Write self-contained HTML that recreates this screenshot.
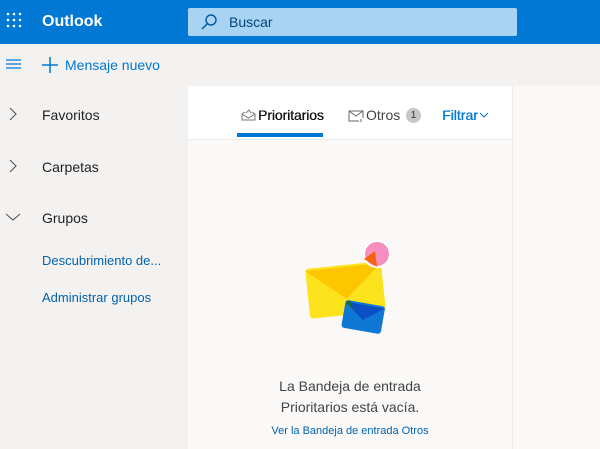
<html><head><style>
body{margin:0;width:600px;height:449px;overflow:hidden;font-family:"Liberation Sans",sans-serif;background:#f3f2f1;position:relative}
.a{position:absolute}
</style></head><body>
<div class="a" style="left:0;top:0;width:600px;height:44px;background:#0078d4"></div>
<svg class="a" style="left:6px;top:12px" width="16" height="16" fill="#fff"><g><circle cx="2" cy="2" r="1.3"/><circle cx="8" cy="2" r="1.3"/><circle cx="14" cy="2" r="1.3"/><circle cx="2" cy="8" r="1.3"/><circle cx="8" cy="8" r="1.3"/><circle cx="14" cy="8" r="1.3"/><circle cx="2" cy="14" r="1.3"/><circle cx="8" cy="14" r="1.3"/><circle cx="14" cy="14" r="1.3"/></g></svg>
<div class="a" style="left:42px;top:13px;color:#fff;font-size:16px;font-weight:bold">Outlook</div>
<div class="a" style="left:188px;top:8px;width:329px;height:28px;background:#a9d3f2;border-radius:2px"></div>
<svg class="a" style="left:200px;top:13px" width="18" height="18" fill="none" stroke="#005a9e" stroke-width="1.4"><circle cx="11" cy="7" r="5"/><path d="M7.5 10.5L2 16"/></svg>
<div class="a" style="left:229px;top:14px;color:#004578;font-size:14px">Buscar</div>
<svg class="a" style="left:6px;top:58px" width="16" height="12" stroke="#0078d4" stroke-width="1.2"><path d="M0 2H15M0 6H15M0 10H15"/></svg>
<svg class="a" style="left:41px;top:56px" width="18" height="18" stroke="#0078d4" stroke-width="1.5"><path d="M9 1V17M1 9H17"/></svg>
<div class="a" style="left:65px;top:57px;color:#0078d4;font-size:14px">Mensaje nuevo</div>
<div class="a" style="left:188px;top:86px;width:324px;height:363px;background:#faf9f8"></div>
<div class="a" style="left:188px;top:86px;width:324px;height:53px;background:#fff;border-bottom:1px solid #edebe9"></div>
<div class="a" style="left:512px;top:86px;width:1px;height:363px;background:#edebe9"></div>
<div class="a" style="left:513px;top:86px;width:87px;height:363px;background:#faf9f8"></div>
<svg class="a" style="left:8px;top:107px" width="10" height="14" fill="none" stroke="#555" stroke-width="1.1"><path d="M2 1L8 7L2 13"/></svg>
<svg class="a" style="left:8px;top:159px" width="10" height="14" fill="none" stroke="#555" stroke-width="1.1"><path d="M2 1L8 7L2 13"/></svg>
<svg class="a" style="left:5px;top:212px" width="16" height="10" fill="none" stroke="#555" stroke-width="1.1"><path d="M1 2L8 8L15 2"/></svg>
<div class="a" style="left:42px;top:107px;font-size:14px;color:#222">Favoritos</div>
<div class="a" style="left:42px;top:159px;font-size:14px;color:#222">Carpetas</div>
<div class="a" style="left:42px;top:210px;font-size:14px;color:#222">Grupos</div>
<div class="a" style="left:42px;top:253px;font-size:13px;color:#0063b1">Descubrimiento de...</div>
<div class="a" style="left:42px;top:290px;font-size:13px;color:#0063b1">Administrar grupos</div>
<svg class="a" style="left:241px;top:109px" width="15" height="12" fill="none" stroke="#777" stroke-width="1"><path d="M1 5V11H14V5L11 3M1 5L7.5 9L14 5M1 5L4 3M5 4L8 1L10 4"/></svg>
<div class="a" style="left:258px;top:107px;font-size:14px;color:#111;letter-spacing:-.1px;text-shadow:0.3px 0 0 #111">Prioritarios</div>
<div class="a" style="left:237px;top:133px;width:86px;height:4px;background:#0078d4"></div>
<svg class="a" style="left:348px;top:110px" width="16" height="12" fill="none" stroke="#666" stroke-width="1"><path d="M1 1H15V8M1 1V11H11M1 1L8 6L15 1M13 9V12"/></svg>
<div class="a" style="left:366px;top:107px;font-size:14px;color:#444">Otros</div>
<div class="a" style="left:406px;top:108px;width:15px;height:15px;border-radius:50%;background:#c8c6c4;font-size:10px;text-align:center;line-height:15px;color:#333">1</div>
<div class="a" style="left:442px;top:107px;font-size:14px;color:#0078d4;text-shadow:0.4px 0 0 #0078d4">Filtrar</div>
<svg class="a" style="left:479px;top:112px" width="10" height="7" fill="none" stroke="#0078d4" stroke-width="1.1"><path d="M1 1L5 5L9 1"/></svg>
<svg class="a" style="left:300px;top:235px" width="100" height="105">
<g transform="rotate(-6 45 50)"><rect x="7" y="30" width="76" height="50" rx="3" fill="#fde31e"/><path d="M7 32L45 64L83 32Z" fill="#fec600"/></g>
<g transform="rotate(10 63 83)"><rect x="43" y="68" width="40" height="28" rx="3" fill="#0f78d4"/><path d="M43 70L63 85L83 70Z" fill="#0a4fc4"/><path d="M43 70L52 77L47 68Z" fill="#1b6b2a"/></g>
<circle cx="77" cy="19" r="14" fill="#fff"/><circle cx="77" cy="19" r="12" fill="#f68fbf"/><path d="M64 24L75 16L77 32Z" fill="#f7630c"/>
</svg>
<div class="a" style="left:188px;top:376px;width:324px;text-align:center;font-size:14px;color:#444;line-height:21px">La Bandeja de entrada<br>Prioritarios está vacía.</div>
<div class="a" style="left:188px;top:425px;width:324px;text-align:center;font-size:11px;color:#0063b1">Ver la Bandeja de entrada Otros</div>
</body></html>
